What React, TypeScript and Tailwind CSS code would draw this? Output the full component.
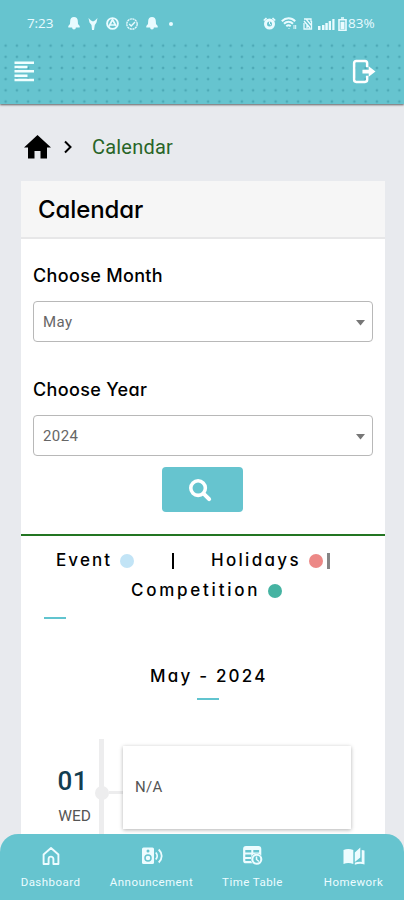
import React from "react";

const display = "font-['Inter','Noto_Sans',sans-serif] [font-feature-settings:'cv11']";

const Bell = () => (
  <svg width="12" height="13" viewBox="0 0 12 13" fill="currentColor">
    <path d="M6 0C3.700 0 2.300 1.500 2.200 3.700L2 7 .3 9v1.500h3.800a1.900 1.900 0 0 0 3.800 0h3.800V9L10 7l-.2-3.300C9.700 1.500 8.300 0 6 0Z" />
  </svg>
);

function StatusBar() {
  return (
    <div className="flex h-10 items-end justify-between pr-[28px] pb-[9px] pl-[27px] font-['Open_Sans',sans-serif] text-[13.5px] leading-[15px] text-[#e9fbff]">
      <div className="flex h-[15px] items-center">
        <span className="w-[41px] tracking-[-0.1px]">7:23</span>
        <Bell />
        <svg className="ml-[8px]" width="10" height="12" viewBox="0 0 10 12" fill="currentColor">
          <path d="M.5 0 3 2.500 5 3.500 7 2.500 9.500 0 8.500 4.500 6.800 7 6 12H4L3.500 7 1.500 4.500Z" />
        </svg>
        <svg className="ml-[8px]" width="13" height="13" viewBox="0 0 13 13" fill="none" stroke="currentColor">
          <circle cx="6.500" cy="6.500" r="5.400" strokeWidth="1.900" />
          <path d="M6.500 2.500 3 9.500M6.500 2.500 10 9M4 8h6" strokeWidth="1.700" />
        </svg>
        <svg className="ml-[7px]" width="12" height="12" viewBox="0 0 12 12" fill="none" stroke="currentColor">
          <circle cx="6" cy="6" r="5.200" strokeWidth="1.300" strokeDasharray="2.200 .5" />
          <path d="m3.200 6 2 2 3.800-4" strokeWidth="1.400" />
        </svg>
        <span className="ml-[8px] flex"><Bell /></span>
        <span className="ml-[11px] size-[4px] rounded-full bg-[#e9fbff]" />
      </div>
      <div className="flex h-[15px] items-center">
        <svg width="13" height="13" viewBox="0 0 13 13" fill="none" stroke="currentColor">
          <circle cx="6.500" cy="7" r="4" strokeWidth="3" />
          <path d="M.8 3.500 3.500 1M12.200 3.500 9.500 1" strokeWidth="1.700" />
          <path d="M6.500 4.500V7l1.500 1" />
        </svg>
        <svg className="ml-[5px]" width="16" height="13" viewBox="0 0 16 13" fill="none" stroke="currentColor" strokeWidth="2">
          <path d="M.8 4.200c4-4 9.500-4 13.400 0M3 6.800c2.700-2.700 6.300-2.700 9 0M5.300 9.300c1.400-1.300 3-1.300 4.400 0" />
          <path d="m7.500 12 1-1M13 8v4M14.700 8v4" strokeWidth="1" />
        </svg>
        <svg className="ml-[6px]" width="10" height="12" viewBox="0 0 10 12" fill="none" stroke="currentColor">
          <path d="M1 1h7v3M1 3l6 7M1 5v6h7.500V3M3 1l5 6M4 6v4" strokeWidth="1.300" />
        </svg>
        <svg className="ml-[5px]" width="17" height="12" viewBox="0 0 17 12" fill="currentColor">
          <path d="M0 8h2.500v4H0zM4 7h2.500v5H4zM7.300 5h2.500v7H7.300zM10.700 3H13v9h-2.300zM14.300 1h2.200v11h-2.200z" />
        </svg>
        <svg className="ml-[3px]" width="9" height="14" viewBox="0 0 9 14" fill="none" stroke="currentColor">
          <path d="M3 1h3M1 2.700h7v10.500H1Z" strokeWidth="1.600" />
          <path d="M2.500 4.800h4v7.400h-4z" fill="currentColor" stroke="none" />
        </svg>
        <span className="ml-[1px] w-[28px] text-[13.5px]">83%</span>
      </div>
    </div>
  );
}

function Select({ label, value }: { label: string; value: string }) {
  return (
    <div className="flex flex-col">
      <label className={`${display} h-[30px] text-[18px] leading-[32px] font-medium tracking-[0.34px] text-black`}>{label}</label>
      <div className="mt-[11px] flex h-[41px] items-center justify-between rounded-[4px] border-[1.5px] border-[#b8b8b8] bg-white pr-[7px] pl-[9px]">
        <span className="pt-[2px] font-[Roboto,sans-serif] text-[15px] tracking-[0.4px] text-[#666]">{value}</span>
        <svg className="mt-[2px]" width="9" height="6" viewBox="0 0 9 6" fill="#777"><path d="M0 0h9L4.500 5.500Z" /></svg>
      </div>
    </div>
  );
}

const navItems = [
  {
    label: "Dashboard",
    icon: (
      <svg width="20" height="20" viewBox="0 0 20 20" fill="none" stroke="currentColor" strokeWidth="1.900" strokeLinejoin="round">
        <path d="M2.600 8.500 10 2l7.400 6.500V18h-5v-5a2.400 2.400 0 0 0-4.800 0v5h-5Z" />
      </svg>
    ),
  },
  {
    label: "Announcement",
    icon: (
      <svg width="22" height="20" viewBox="0 0 22 20">
        <rect x="1" y="1.500" width="12" height="16.500" rx="1.500" fill="currentColor" />
        <circle cx="7" cy="5" r="1.500" fill="#66c4cf" />
        <circle cx="7" cy="12" r="3" fill="none" stroke="#66c4cf" strokeWidth="1.500" />
        <path d="M14.800 6.500c1.800 2 1.800 5 0 7M17.700 3.500c4 3.800 4 9.200 0 13" fill="none" stroke="currentColor" strokeWidth="1.800" />
      </svg>
    ),
  },
  {
    label: "Time Table",
    icon: (
      <svg width="20" height="20" viewBox="0 0 20 20" fill="none">
        <rect x="1.200" y="1.200" width="16" height="15" rx="1.800" stroke="currentColor" strokeWidth="2.200" />
        <path d="M1 3h16M1 7.500h16M1 12h10M9.300 3v13" stroke="currentColor" strokeWidth="2" />
        <circle cx="13.800" cy="13.300" r="5.900" fill="#66c4cf" />
        <circle cx="13.800" cy="13.300" r="4.500" stroke="currentColor" strokeWidth="2.100" />
        <path d="M13.500 10.500v3l2.500 2" stroke="currentColor" strokeWidth="1.500" />
      </svg>
    ),
  },
  {
    label: "Homework",
    icon: (
      <svg width="22" height="20" viewBox="0 0 22 20" fill="currentColor">
        <path d="M.5 4c3-1.500 6.500-1.500 9.800 0v14c-3.300-1.200-6.800-1.200-9.800 0ZM11.800 6.500l5.500-5v10l-5.500 4.500ZM18.700 4l2.800.5V18.500c-3-1.200-6-1.200-9.700.3v-2c2-1 4.700-1.300 6.900-.8Z" />
      </svg>
    ),
  },
];

export default function App() {
  return (
    <div className="relative h-[900px] w-full overflow-hidden bg-[#e8eaee]">
      <header className="relative h-[104px] bg-[#66c4cf] shadow-[0_1px_2px_rgba(0,0,0,0.6)]">
        <StatusBar />
        <div className="flex h-[64px] items-center justify-between bg-[radial-gradient(circle,#4da9b6_0.8px,transparent_1.7px)] bg-[length:11.25px_11.2px] pr-[28px] pl-[14px] text-white">
          <svg className="-mt-[2px]" width="21" height="21" viewBox="0 0 21 21" fill="#f0ffff">
            <path d="M.5.500h19.500v2.500H.5zM.5 4.800h13v2.500H.5zM.5 9.100h19.500v2.500H.5zM.5 13.400h13v2.500H.5zM.5 17.700h19.500v2.500H.5z" />
          </svg>
          <svg className="-mt-[1px]" width="25" height="25" viewBox="0 0 24 24" fill="none" stroke="white" strokeWidth="2.400">
            <path d="M15.500 8V4Q15.500 2 13.500 2H5Q3 2 3 4v16Q3 22 5 22h8.500q2 0 2-2V16" />
            <path d="M11 10.200H17V7l6.500 5-6.500 5v-3.200H11Z" fill="white" stroke="none" />
          </svg>
        </div>
      </header>

      <nav className="flex h-[77px] items-center pt-[8px] pl-[24px]">
        <svg width="27" height="26" viewBox="0 0 27 26" fill="black">
          <path d="M13.500 1 27 13.500h-4V24.500h-6.500V17h-6v7.500H4V13.500H0Z" />
        </svg>
        <svg className="ml-[12px]" width="10" height="14" viewBox="0 0 10 14" fill="none" stroke="black" strokeWidth="2"><path d="m2 1.500 5.500 5.500L2 12.500" /></svg>
        <span className="ml-[19px] font-[Roboto,sans-serif] text-[20px] tracking-[0.2px] text-[#286528]">Calendar</span>
      </nav>

      <main className="ml-[21px] h-[719px] w-[364px] bg-white">
        <h1 className={`${display} h-[58px] border-b-2 border-[#e7e7e8] bg-[#f6f6f6] pl-[17px] text-[24px] leading-[57px] font-medium tracking-[-0.1px] text-black`}>Calendar</h1>
        <div className="flex flex-col px-[12px] pt-[21px]">
          <Select label="Choose Month" value="May" />
          <div className="h-[32px]" />
          <Select label="Choose Year" value="2024" />
          <button className="mt-[11px] ml-[129px] flex h-[45px] w-[81px] items-center justify-center rounded-[4px] bg-[#66c4cf]">
            <svg className="-ml-[5px]" width="24" height="24" viewBox="0 0 25 25" fill="none" stroke="white" strokeLinecap="round">
              <circle cx="10.500" cy="10.500" r="7.600" strokeWidth="3.700" />
              <path d="m16.500 16.500 5.500 5.500" strokeWidth="4.200" />
            </svg>
          </button>
        </div>

        <section className={`${display} mt-[22px] border-t-2 border-[#237522] text-[17px] font-medium text-black`}>
          <div className="flex h-[30px] items-center pt-[19px] pl-[35px]">
            <span className="w-[64px] pt-[1px] tracking-[2.1px]">Event</span>
            <i className="size-[14px] rounded-full bg-[#c2e4f6]" />
            <i className="ml-[38px] h-[16px] w-[2px] bg-black" />
            <span className="ml-[37px] w-[98px] pt-[1px] tracking-[2.3px]">Holidays</span>
            <i className="size-[14px] rounded-full bg-[#ec8886]" />
            <i className="ml-[4px] h-[16px] w-[3px] bg-[#858585]" />
          </div>
          <div className="flex h-[30px] items-center pt-[19px] pl-[110px]">
            <span className="w-[137px] pt-[1px] tracking-[2.75px]">Competition</span>
            <i className="size-[14px] rounded-full bg-[#45b3a2]" />
          </div>
          <div className="mt-[21px] ml-[23px] h-[2px] w-[22px] bg-[#61c4cf]" />
          <h2 className="mt-[45px] h-[24px] pl-[129px] text-[17px] leading-[24px] tracking-[2.2px]">May - 2024</h2>
          <div className="mt-[10px] ml-[176px] h-[2px] w-[22px] bg-[#61c4cf]" />
        </section>

        <section className="mt-[39px] flex h-[150px] font-[Roboto,sans-serif]">
          <div className="flex w-[78px] flex-col items-end pt-[26px]">
            <span className="mr-[11px] text-[26px] leading-[32px] font-medium tracking-[0.5px] text-[#123e51]">01</span>
            <span className="mt-[9px] mr-[8px] text-[15.5px] leading-[20px] text-[#555]">WED</span>
          </div>
          <div className="w-[5px] bg-[#ededee]" />
          <div className="-ml-[9px] mt-[47px] size-[14px] shrink-0 rounded-full bg-[#ededee]" />
          <div className="mt-[52px] h-[3px] w-[14px] bg-[#ededee]" />
          <div className="mt-[7px] flex h-[83px] w-[228px] items-center bg-white pl-[12px] text-[15px] tracking-[0.3px] text-[#555] shadow-[0_1px_4px_rgba(0,0,0,0.3)]">N/A</div>
        </section>
      </main>

      <footer className="absolute inset-x-0 bottom-0 flex h-[66px] rounded-t-[18px] bg-[#66c4cf] text-[#edfcff]">
        {navItems.map((item) => (
          <div key={item.label} className="flex flex-1 flex-col items-center pt-[12px]">
            {item.icon}
            <span className="mt-[8px] font-[Roboto,sans-serif] text-[11.5px] leading-[16px] tracking-[0.45px]">{item.label}</span>
          </div>
        ))}
      </footer>
    </div>
  );
}
